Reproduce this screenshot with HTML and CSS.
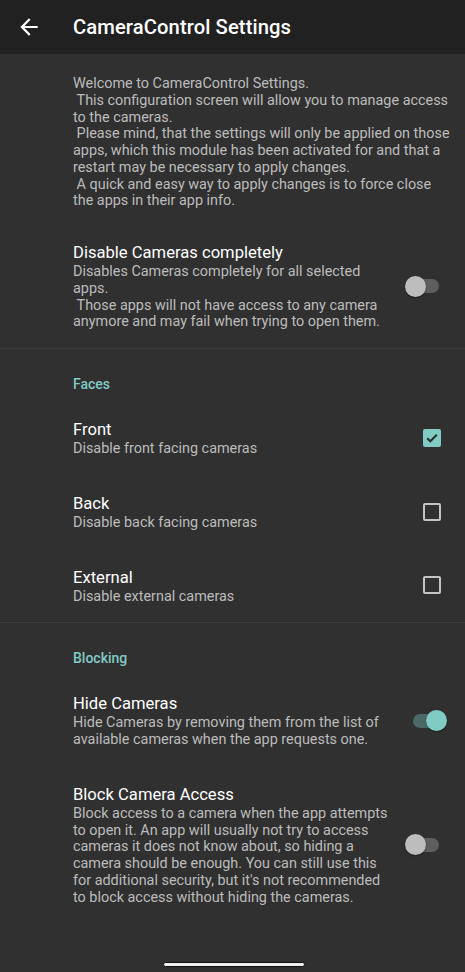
FILE: index.html
```html
<!DOCTYPE html>
<html lang="en">

<head>
	<meta charset="UTF-8">
	<meta name="viewport" content="width=device-width, initial-scale=1.0">
	<title>CameraControl Settings</title>

	<link rel="stylesheet" href="styles.css">
</head>

<body>
	<header class="app-bar">
		<svg class="back" viewBox="0 0 24 24" width="26" height="26">
			<path d="M20 11H7.83l5.59-5.59L12 4l-8 8 8 8 1.41-1.41L7.83 13H20v-2z" fill="#fff" />
		</svg>
		<h1>CameraControl Settings</h1>
	</header>

	<main class="prefs">
		<div class="pref intro">
			<div class="pref-text">
				<p class="summary">Welcome to CameraControl Settings.<br>&nbsp;This configuration screen will allow you to manage access to the cameras.<br>&nbsp;Please mind, that the settings will only be applied on those apps, which this module has been activated for and that a restart may be necessary to apply changes.<br>&nbsp;A quick and easy way to apply changes is to force close the apps in their app info.</p>
			</div>
		</div>

		<div class="pref">
			<div class="pref-text">
				<div class="title">Disable Cameras completely</div>
				<p class="summary">Disables Cameras completely for all selected apps.<br>&nbsp;Those apps will not have access to any camera anymore and may fail when trying to open them.</p>
			</div>
			<div class="widget"><span class="switch"></span></div>
		</div>

		<div class="category">
			<div class="category-title">Faces</div>
		</div>

		<div class="pref">
			<div class="pref-text">
				<div class="title">Front</div>
				<p class="summary">Disable front facing cameras</p>
			</div>
			<div class="widget">
				<span class="checkbox checked">
					<svg viewBox="0 0 18 18" width="18" height="18">
						<path d="M4.2 9.2l3.1 3.1 6.5-6.5" fill="none" stroke="#2b2b2b" stroke-width="2" />
					</svg>
				</span>
			</div>
		</div>

		<div class="pref">
			<div class="pref-text">
				<div class="title">Back</div>
				<p class="summary">Disable back facing cameras</p>
			</div>
			<div class="widget"><span class="checkbox"></span></div>
		</div>

		<div class="pref">
			<div class="pref-text">
				<div class="title">External</div>
				<p class="summary">Disable external cameras</p>
			</div>
			<div class="widget"><span class="checkbox"></span></div>
		</div>

		<div class="category">
			<div class="category-title">Blocking</div>
		</div>

		<div class="pref">
			<div class="pref-text">
				<div class="title">Hide Cameras</div>
				<p class="summary">Hide Cameras by removing them from the list of available cameras when the app requests one.</p>
			</div>
			<div class="widget"><span class="switch on"></span></div>
		</div>

		<div class="pref last">
			<div class="pref-text">
				<div class="title">Block Camera Access</div>
				<p class="summary">Block access to a camera when the app attempts to open it. An app will usually not try to access cameras it does not know about, so hiding a camera should be enough. You can still use this for additional security, but it's not recommended to block access without hiding the cameras.</p>
			</div>
			<div class="widget"><span class="switch"></span></div>
		</div>
	</main>

	<!-- gesture bar -->
	<div class="nav-handle"></div>
</body>

</html>
```

FILE: styles.css
```css
:root {
	--bar-color: #212121;
	--background-color: #303030;
	--divider-color: #3d3d3d;

	--text-color-main: #ffffff;
	--text-color-summary: #bcbcbc;
	--accent: #80cbc4;
}

body {
	font-family: Roboto, "Noto Sans", sans-serif;
	margin: 0;
	padding: 0;
	min-height: 972px;
	background-color: var(--background-color);
	color: var(--text-color-main);
}

.app-bar {
	display: flex;
	align-items: center;
	height: 54px;
	background-color: var(--bar-color);
}

.back {
	margin-left: 16px;
	margin-right: 31px;
}

.app-bar h1 {
	margin: 0;
	font-size: 20.2px;
	font-weight: 500;
	letter-spacing: 0.1px;
}

.pref {
	display: flex;
	align-items: center;
	padding: 17px 18px 17px 73px;
}

.pref-text {
	flex: 1;
	min-width: 0;
}

.title {
	font-size: 16.6px;
	line-height: 23px;
}

.summary {
	margin: 0;
	font-size: 14.4px;
	line-height: 16.75px;
	color: var(--text-color-summary);
}

.intro {
	padding-top: 22px;
	padding-bottom: 14px;
	padding-right: 11px;
}

.widget {
	display: flex;
	justify-content: center;
	align-items: center;
	width: 42px;
	margin-left: 14px;
}

.category {
	border-top: 1px solid var(--divider-color);
	padding: 27px 18px 9px 73px;
}

.category-title {
	font-size: 14px;
	line-height: 16px;
	font-weight: 500;
	color: var(--accent);
}

/* checkbox */
.checkbox {
	display: block;
	box-sizing: border-box;
	width: 18px;
	height: 18px;
	margin-left: 12px;
	border: 2px solid #c4c4c4;
	border-radius: 2px;
}

.checkbox.checked {
	border: none;
	background-color: var(--accent);
}

.checkbox svg {
	display: block;
}

/* switch */
.switch {
	position: relative;
	display: block;
	width: 42px;
	height: 21px;
}

.switch::before {
	content: "";
	position: absolute;
	left: 6px;
	top: 3.5px;
	width: 28px;
	height: 14px;
	border-radius: 7px;
	background-color: #5e5e5e;
}

.switch::after {
	content: "";
	position: absolute;
	left: 0;
	top: 0;
	width: 21px;
	height: 21px;
	border-radius: 50%;
	background-color: #bdbdbd;
	box-shadow: 0 1px 2px rgba(0, 0, 0, 0.4);
}

.switch.on::before {
	left: 8px;
	background-color: #4b6967;
}

.switch.on::after {
	left: 21px;
	background-color: var(--accent);
}

.nav-handle {
	position: absolute;
	top: 962px;
	left: 163px;
	width: 140px;
	height: 3px;
	background-color: #f0f0f0;
	border: 1px solid #111;
	border-radius: 3px;
}
```
